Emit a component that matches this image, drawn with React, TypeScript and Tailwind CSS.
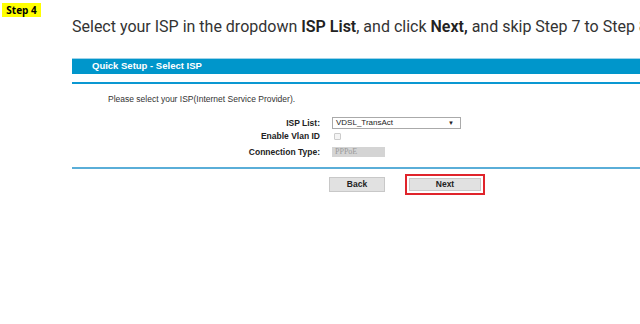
export default function App() {
  const label = "w-[260px] text-right pr-[12px] font-bold text-[8.5px] text-[#222]";
  return (
    <div className="relative w-[640px] h-[324px] overflow-hidden bg-white font-['Liberation_Sans',Arial,sans-serif]">
      <div className="ml-[2px] mt-[3px] flex h-[14px] w-[39px] items-center justify-center bg-[#ffff00] text-[10px] font-bold text-black font-['Open_Sans',sans-serif]">
        Step 4
      </div>
      <div className="ml-[72px] whitespace-nowrap text-[16px] leading-[20px] text-[#333] font-['Roboto',sans-serif]">
        Select your ISP in the dropdown <b className="font-semibold text-[#222]">ISP List</b>, and click{" "}
        <b className="font-semibold text-[#222]">Next,</b> and skip Step 7 to Step 8
      </div>

      <div className="ml-[72px] mt-[21px]">
        <div className="flex h-[16px] items-center border-t border-[#9fd3ea] bg-[#0096cb] pl-[20px] text-[9.5px] font-bold text-white">
          Quick Setup - Select ISP
        </div>
        <div className="mt-[8px] h-[2px] bg-[#0a98d2]" />

        <div className="ml-[36px] mt-[9px] text-[8.5px] leading-[12px] text-[#333]">
          Please select your ISP(Internet Service Provider).
        </div>

        <div className="mt-[12px] flex flex-col">
          <div className="flex h-[12px] items-center">
            <div className={label}>ISP List:</div>
            <div className="flex h-[12px] w-[129px] items-center justify-between border border-[#aaa] bg-white pl-[3px] pr-[6px] text-[8px] text-[#222]">
              <span>VDSL_TransAct</span>
              <span className="text-[6px]">▼</span>
            </div>
          </div>
          <div className="mt-[1px] flex h-[12px] items-center">
            <div className={label}>Enable Vlan ID</div>
            <div className="ml-[2px] h-[7px] w-[7px] rounded-[1px] border border-[#ccc] bg-[#f4f4f4]" />
          </div>
          <div className="mt-[4px] flex h-[12px] items-center">
            <div className={label}>Connection Type:</div>
            <div className="flex h-[10px] w-[53px] items-center bg-[#d4d4d4] pl-[3px] text-[8px] text-[#9a9a9a] font-['Liberation_Serif',serif]">
              PPPoE
            </div>
          </div>
        </div>

        <div className="mt-[9px] h-[2px] bg-[#5aaed8]" />

        <div className="mt-[5px] flex items-center">
          <button className="ml-[257px] h-[15px] w-[56px] border border-[#c8c8c8] bg-[#e1e1e1] text-[8.5px] font-bold text-[#222]">
            Back
          </button>
          <div className="ml-[20px] flex h-[21px] w-[80px] items-center justify-center border-2 border-[#e0242b]">
            <button className="h-[13px] w-[72px] border border-[#c8c8c8] bg-[#e1e1e1] text-[8.5px] font-bold leading-[11px] text-[#222]">
              Next
            </button>
          </div>
        </div>
      </div>
    </div>
  );
}
